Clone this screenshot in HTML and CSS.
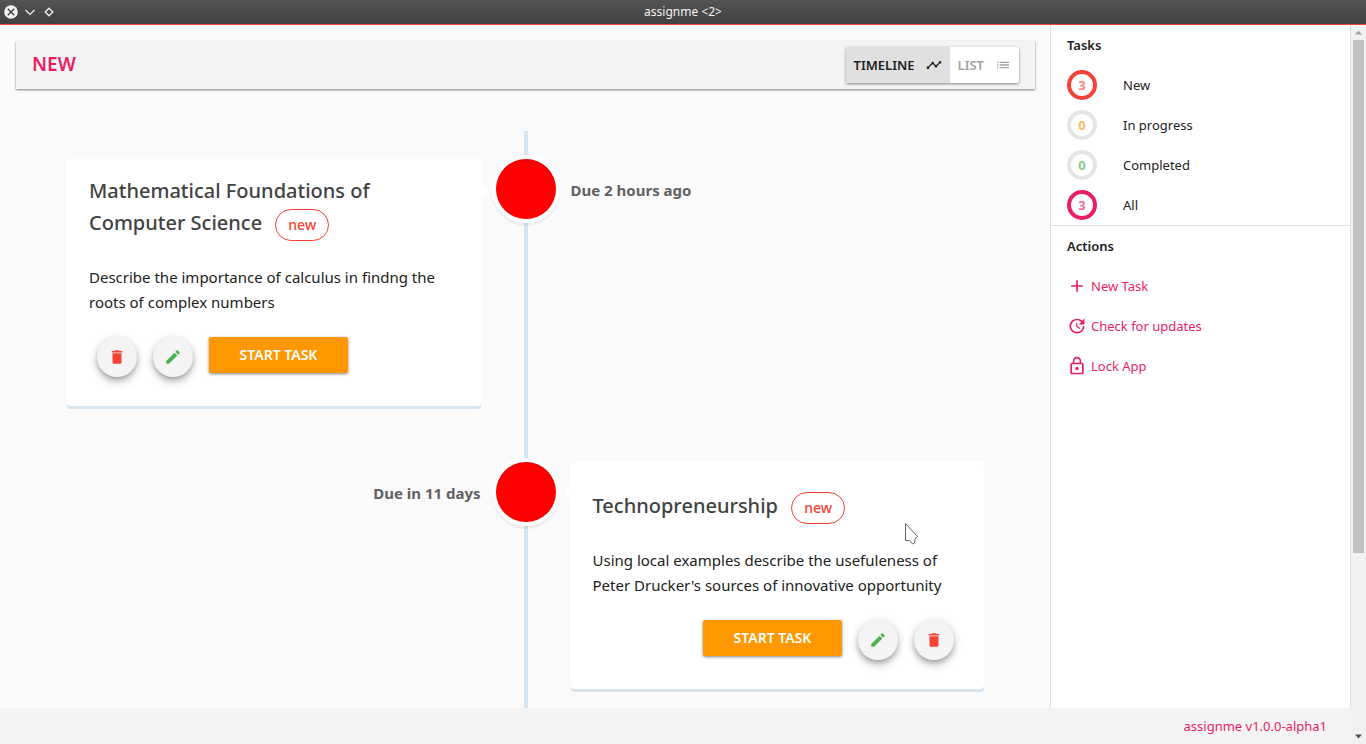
FILE: index.html
```html
<!DOCTYPE html>
<html lang="en">
<head>
<meta charset="utf-8">
<title>assignme</title>
<link rel="stylesheet" href="styles.css">
</head>
<body>
<svg class="sprite" aria-hidden="true">
  <symbol id="i-delete" viewBox="0 0 24 24"><path d="M19 4h-3.500l-1-1h-5l-1 1H5v2h14zM6 19a2 2 0 0 0 2 2h8a2 2 0 0 0 2-2V7H6z"/></symbol>
  <symbol id="i-edit" viewBox="0 0 24 24"><path d="M3 17.250V21h3.750L17.810 9.940l-3.750-3.750L3 17.250zM20.710 7.040a1 1 0 0 0 0-1.410l-2.340-2.340a1 1 0 0 0-1.410 0l-1.830 1.830 3.750 3.750 1.830-1.830z"/></symbol>
  <symbol id="i-add" viewBox="0 0 24 24"><path d="M19 13h-6v6h-2v-6H5v-2h6V5h2v6h6v2z"/></symbol>
  <symbol id="i-update" viewBox="0 0 24 24"><path d="M21 10.120h-6.780l2.740-2.820c-2.730-2.700-7.150-2.800-9.880-.1-2.730 2.710-2.730 7.080 0 9.790s7.150 2.710 9.880 0C18.320 15.650 19 14.080 19 12.100h2c0 1.980-.88 4.550-2.640 6.290-3.510 3.480-9.210 3.480-12.720 0-3.500-3.470-3.530-9.110-.02-12.580s9.140-3.470 12.650 0L21 3v7.120zM12.500 8v4.250l3.500 2.080-.72 1.210L11 13V8h1.500z"/></symbol>
  <symbol id="i-lock" viewBox="0 0 24 24"><path d="M12 17c1.100 0 2-.9 2-2s-.9-2-2-2-2 .9-2 2 .9 2 2 2zm6-9h-1V6c0-2.760-2.240-5-5-5S7 3.240 7 6v2H6c-1.100 0-2 .9-2 2v10c0 1.100.9 2 2 2h12c1.100 0 2-.9 2-2V10c0-1.100-.9-2-2-2zM8.900 6c0-1.710 1.390-3.100 3.100-3.100s3.100 1.390 3.100 3.100v2H8.900V6zM18 20H6V10h12v10z"/></symbol>
  <symbol id="i-timeline" viewBox="0 0 24 24"><path d="M23 8c0 1.100-.9 2-2 2-.18 0-.35-.02-.51-.07l-3.560 3.550c.05.16.07.34.07.52 0 1.100-.9 2-2 2s-2-.9-2-2c0-.18.02-.36.07-.52l-2.550-2.550c-.16.05-.34.07-.52.07s-.36-.02-.52-.07l-4.550 4.560c.05.16.07.33.07.51 0 1.100-.9 2-2 2s-2-.9-2-2 .9-2 2-2c.18 0 .35.02.51.07l4.560-4.550C8.020 9.360 8 9.180 8 9c0-1.100.9-2 2-2s2 .9 2 2c0 .18-.02.36-.07.52l2.550 2.550c.16-.05.34-.07.52-.07s.36.02.52.07l3.550-3.560C19.020 8.350 19 8.180 19 8c0-1.100.9-2 2-2s2 .9 2 2z"/></symbol>
  <symbol id="i-list" viewBox="0 0 24 24"><path d="M3 13h2v-2H3v2zm0 4h2v-2H3v2zm0-8h2V7H3v2zm4 4h14v-2H7v2zm0 4h14v-2H7v2zM7 7v2h14V7H7z"/></symbol>
</svg>

<header class="titlebar">
  <div class="window-buttons">
    <button class="window-button" aria-label="Close"><svg viewBox="0 0 14 14"><circle cx="7" cy="7" r="6.800" fill="#f2f2f2"/><path d="M3.800 3.800l6.400 6.400M10.200 3.800l-6.400 6.400" stroke="#3c3c3c" stroke-width="1.300"/></svg></button>
    <button class="window-button" aria-label="Minimize"><svg viewBox="0 0 14 14"><path d="M2.500 5l4.500 4.500L11.500 5" fill="none" stroke="#f2f2f2" stroke-width="1.200"/></svg></button>
    <button class="window-button" aria-label="Maximize"><svg viewBox="0 0 14 14"><path d="M7 3.200L10.800 7 7 10.800 3.200 7z" fill="none" stroke="#f2f2f2" stroke-width="1.300"/></svg></button>
  </div>
  <div class="window-title">assignme &lt;2&gt;</div>
</header>

<div class="window">
  <div class="app">
    <div class="content">
      <main class="main">
        <div class="toolbar">
          <h1 class="toolbar-title">NEW</h1>
          <div class="toggle">
            <button class="toggle-button toggle-active">TIMELINE <svg class="icon-small"><use href="#i-timeline"/></svg></button>
            <button class="toggle-button">LIST <svg class="icon-small"><use href="#i-list"/></svg></button>
          </div>
        </div>
        <section class="timeline">
          <article class="item">
            <div class="card">
              <div class="card-head"><h2 class="card-title">Mathematical Foundations of Computer Science <span class="chip">new</span></h2></div>
              <p class="card-text">Describe the importance of calculus in findng the roots of complex numbers</p>
              <div class="actions">
                <button class="round round-delete" aria-label="Delete"><svg class="icon-round"><use href="#i-delete"/></svg></button>
                <button class="round round-edit" aria-label="Edit"><svg class="icon-round"><use href="#i-edit"/></svg></button>
                <button class="start">START TASK</button>
              </div>
            </div>
            <div class="dot"></div>
            <div class="due">Due 2 hours ago</div>
          </article>
          <article class="item item-right">
            <div class="due">Due in 11 days</div>
            <div class="dot"></div>
            <div class="card">
              <div class="card-head"><h2 class="card-title">Technopreneurship <span class="chip">new</span></h2></div>
              <p class="card-text">Using local examples describe the usefuleness of Peter Drucker's sources of innovative opportunity</p>
              <div class="actions">
                <button class="start">START TASK</button>
                <button class="round round-edit" aria-label="Edit"><svg class="icon-round"><use href="#i-edit"/></svg></button>
                <button class="round round-delete" aria-label="Delete"><svg class="icon-round"><use href="#i-delete"/></svg></button>
              </div>
            </div>
          </article>
        </section>
      </main>
      <aside class="sidebar">
        <section class="group">
          <h2 class="group-title">Tasks</h2>
          <a class="filter" href="#new"><span class="ring ring-new"><span class="count count-new">3</span></span>New</a>
          <a class="filter" href="#progress"><span class="ring"><span class="count count-progress">0</span></span>In progress</a>
          <a class="filter" href="#completed"><span class="ring"><span class="count count-completed">0</span></span>Completed</a>
          <a class="filter" href="#all"><span class="ring ring-all"><span class="count count-all">3</span></span>All</a>
        </section>
        <section class="group">
          <h2 class="group-title">Actions</h2>
          <a class="action" href="#add"><svg class="icon"><use href="#i-add"/></svg>New Task</a>
          <a class="action" href="#update"><svg class="icon"><use href="#i-update"/></svg>Check for updates</a>
          <a class="action" href="#lock"><svg class="icon"><use href="#i-lock"/></svg>Lock App</a>
        </section>
      </aside>
    </div>
    <footer class="footer">assignme v1.0.0-alpha1</footer>
  </div>
  <div class="scrollbar">
    <svg class="arrow" viewBox="0 0 15 15"><path d="M4 9.500L7.500 5.500 11 9.500z" fill="#a3a3a3"/></svg>
    <div class="track"><div class="thumb"></div></div>
    <svg class="arrow" viewBox="0 0 15 15"><path d="M4 5.500L7.500 9.500 11 5.500z" fill="#505050"/></svg>
  </div>
</div>
<svg class="pointer" viewBox="0 0 16 24" aria-hidden="true"><path d="M1.500 1.500v17h4l3 3.500 2-1 .5-4.500 2.500-2z" fill="#fff" stroke="#666" stroke-linejoin="round"/></svg>
</body>
</html>
```
FILE: styles.css
```css
* { box-sizing: border-box; }
body {
  margin: 0;
  height: 100vh;
  display: flex;
  flex-direction: column;
  overflow: hidden;
  background: #fafafa;
  color: #212121;
  font-family: "Noto Sans", "Open Sans", sans-serif;
  font-size: 15px;
}
h1, h2, p { margin: 0; }
button { border: 0; padding: 0; font: inherit; background: none; }
a { color: inherit; text-decoration: none; }
svg { fill: currentColor; flex: none; }
.sprite { position: absolute; width: 0; height: 0; }

.titlebar {
  flex: none;
  display: grid;
  grid-template-columns: 1fr auto 1fr;
  align-items: center;
  height: 25px;
  padding: 0 4px;
  border-bottom: 1px solid #f44336;
  background: linear-gradient(#535353, #404040);
  color: #f2f2f2;
}
.window-buttons { display: flex; gap: 5px; }
.window-button, .window-button svg { display: block; width: 14px; height: 14px; }
.window-title { font-size: 12px; line-height: 24px; }

.window { flex: 1; min-height: 0; display: flex; }
.app { flex: 1; min-width: 0; display: flex; flex-direction: column; }
.content { flex: 1; min-height: 0; display: flex; }
.main { flex: 1; min-width: 0; padding: 16px 15px 0 16px; overflow: hidden; }

.toolbar {
  display: flex;
  align-items: center;
  justify-content: space-between;
  height: 48px;
  padding: 0 16px;
  background: #f4f4f4;
  box-shadow: 0 1px 2px rgba(0, 0, 0, .5);
}
.toolbar-title { padding-bottom: 2px; color: #e91e63; font-size: 19px; font-weight: 600; }
.toggle {
  display: flex;
  border-radius: 2px;
  background: #fff;
  box-shadow: 0 1px 3px rgba(0, 0, 0, .45);
}
.toggle-button {
  display: flex;
  align-items: center;
  gap: 11px;
  height: 36px;
  padding: 0 8px;
  color: #a3a3a3;
  font-size: 13px;
  font-weight: 600;
}
.toggle-active { background: #e0e0e0; color: #212121; border-radius: 2px 0 0 2px; }
.icon-small { width: 16px; height: 16px; }

.timeline {
  display: flex;
  flex-direction: column;
  gap: 56px;
  margin: 42px 51px 0;
  padding: 28px 0 56px;
  background: linear-gradient(#d7e4ed, #d7e4ed) center / 4px 100% no-repeat;
}
.item { display: grid; grid-template-columns: 1fr 60px 1fr; column-gap: 15px; align-items: start; }
.card {
  position: relative;
  padding: 16px 22px 29px;
  border-radius: 4px;
  background: #fff;
  box-shadow: 0 3px 0 #d7e4ed;
}
.card::before {
  content: "";
  position: absolute;
  top: 24px;
  left: 100%;
  border: 7px solid transparent;
  border-left-color: #fff;
}
.item-right .card::before {
  left: auto;
  right: 100%;
  border-left-color: transparent;
  border-right-color: #fff;
}
.dot {
  height: 60px;
  border-radius: 50%;
  background: #f00;
  box-shadow: 0 0 0 4px #fff, inset 0 2px 0 rgba(0, 0, 0, .08), 0 3px 0 4px rgba(0, 0, 0, .05);
}
.due { color: #616161; font-size: 15px; font-weight: 700; line-height: 62px; }
.item-right .due { text-align: right; }
.card-head { display: grid; align-content: end; min-height: 46px; }
.card-title { color: #424242; font-size: 20px; font-weight: 500; line-height: 32px; }
.chip {
  display: inline-block;
  height: 32px;
  margin-left: 8px;
  padding: 0 12px;
  border: 1px solid #f44336;
  border-radius: 16px;
  color: #f44336;
  font-size: 14px;
  line-height: 30px;
  vertical-align: middle;
}
.card-text { margin-top: 24px; line-height: 25px; }
.actions { display: flex; gap: 16px; margin: 22px 8px 0; }
.item-right .actions { justify-content: flex-end; }
.round {
  display: grid;
  place-items: center;
  width: 40px;
  height: 40px;
  border-radius: 50%;
  background: #f4f4f4;
  box-shadow: 0 3px 5px -1px rgba(0, 0, 0, .25), 0 6px 10px rgba(0, 0, 0, .14), 0 1px 10px rgba(0, 0, 0, .12);
}
.round-delete { color: #f44336; }
.round-edit { color: #4caf50; }
.icon-round { width: 18px; height: 18px; }
.start {
  width: 139px;
  height: 36px;
  border-radius: 2px;
  background: #ff9800;
  color: #fff;
  font-size: 14px;
  font-weight: 600;
  box-shadow: 0 1px 3px rgba(0, 0, 0, .5);
}

.sidebar {
  flex: none;
  width: 301px;
  border: 0 solid #e0e0e0;
  border-width: 0 1px;
  background: #fff;
  font-size: 13px;
}
.group + .group { border-top: 1px solid #e0e0e0; }
.group-title { padding: 0 16px; font-size: 13px; font-weight: 600; line-height: 40px; }
.filter, .action { display: flex; align-items: center; height: 40px; padding: 0 16px; }
.filter { gap: 26px; }
.action { gap: 4px; color: #e91e63; }
.icon { width: 20px; height: 20px; }
.ring {
  display: grid;
  place-items: center;
  width: 30px;
  height: 30px;
  border: 4px solid #e4e4e4;
  border-radius: 50%;
}
.ring-new { border-color: #f44336; }
.ring-all { border-color: #e91e63; }
.count { font-weight: 700; line-height: 18px; opacity: .65; }
.count-new { color: #f44336; }
.count-progress { color: #ff9800; }
.count-completed { color: #4caf50; }
.count-all { color: #e91e63; }

.footer {
  flex: none;
  padding: 0 24px;
  background: #f4f4f4;
  color: #e91e63;
  font-size: 13px;
  line-height: 36px;
  text-align: right;
}

.scrollbar { flex: none; display: flex; flex-direction: column; width: 15px; background: #f1f1f1; }
.arrow { width: 15px; height: 15px; }
.track { flex: 1; padding: 0 2px; }
.thumb { height: 74.5%; background: #c1c1c1; }
.pointer { position: absolute; left: 904px; top: 522px; width: 16px; height: 24px; }
```
